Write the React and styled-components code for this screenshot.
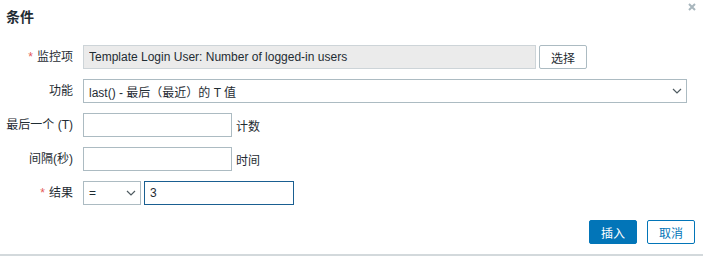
import React from 'react';
import styled, { createGlobalStyle } from 'styled-components';

const GlobalStyle = createGlobalStyle`
  html, body {
    margin: 0;
    padding: 0;
    background: #fff;
  }
  body {
    font-family: "Liberation Sans", Arial, "Noto Sans CJK SC", sans-serif;
    font-size: 12px;
    color: #1f2c33;
  }
`

const Dialog = styled.div`
  position: relative;
  width: 703px;
  height: 256px;
  box-sizing: border-box;
  border-bottom: 2px solid #d3d9dc;
  background: #fff;
`

const Header = styled.div`
  height: 30px;
  padding: 9px 6px 0;
  box-sizing: border-box;
`

const Title = styled.h4`
  margin: 0;
  font-size: 14px;
  font-weight: bold;
  line-height: 16px;
  color: #1f2c33;
`

const CloseButton = styled.button`
  position: absolute;
  top: 2px;
  right: 6px;
  width: 10px;
  height: 10px;
  padding: 0;
  border: 0;
  background: none;
  display: flex;
  align-items: center;
  justify-content: center;
  cursor: pointer;
`

const Form = styled.div`
  display: grid;
  grid-template-columns: 73px 1fr;
  column-gap: 10px;
  row-gap: 10px;
  margin-top: 15px;
`

const Label = styled.label`
  text-align: right;
  align-self: center;
  white-space: nowrap;
  line-height: 14px;
`

const Required = styled.span`
  color: #e45959;
  margin-right: 4px;
`

const Field = styled.div`
  display: flex;
  align-items: center;
  gap: ${p => p.gap ?? 3}px;
`

const TextBox = styled.input`
  box-sizing: border-box;
  width: ${p => p.w}px;
  height: 24px;
  margin: 0;
  padding: 0 5px;
  font: inherit;
  color: #1f2c33;
  background: ${p => (p.readOnly ? '#ebebeb' : '#fff')};
  border: 1px solid ${p => (p.focused ? '#1a5f91' : p.readOnly ? '#cdd4d8' : '#acbbc2')};
  outline: none;
`

const SelectBox = styled.div`
  box-sizing: border-box;
  width: ${p => p.w}px;
  height: 24px;
  padding: 0 4px 0 5px;
  display: flex;
  align-items: center;
  justify-content: space-between;
  border: 1px solid #acbbc2;
  background: #fff;
`

const Hint = styled.span`
  margin-left: 1px;
`

const Button = styled.button`
  box-sizing: border-box;
  height: 24px;
  min-width: 48px;
  padding: 0 8px;
  font: inherit;
  border-radius: 2px;
  cursor: pointer;
  color: ${p => (p.primary ? '#fff' : p.neutral ? '#1f2c33' : '#0275b8')};
  background: ${p => (p.primary ? '#0275b8' : '#fff')};
  border: 1px solid ${p => (p.primary ? '#0275b8' : p.neutral ? '#acbbc2' : '#0275b8')};
`

const Footer = styled.div`
  display: flex;
  justify-content: flex-end;
  gap: 10px;
  margin-top: 15px;
  padding-right: 8px;
`

const Chevron = () => (
  <svg width="10" height="6" viewBox="0 0 10 6">
    <path d="M1 1 L5 5 L9 1" fill="none" stroke="#4f5b61" strokeWidth="1.2" />
  </svg>
)

const CloseIcon = () => (
  <svg width="8" height="8" viewBox="0 0 8 8">
    <path d="M1 1 L7 7 M7 1 L1 7" stroke="#a8b6bd" strokeWidth="2" />
  </svg>
)

const App = () => {
  return (
    <Dialog>
      <GlobalStyle />
      <Header>
        <Title>条件</Title>
      </Header>
      <CloseButton aria-label="关闭"><CloseIcon /></CloseButton>
      <Form>
        <Label><Required>*</Required>监控项</Label>
        <Field>
          <TextBox w={453} readOnly value="Template Login User: Number of logged-in users" />
          <Button neutral>选择</Button>
        </Field>

        <Label>功能</Label>
        <Field>
          <SelectBox w={604}>
            <span>last() - 最后（最近）的 T 值</span>
            <Chevron />
          </SelectBox>
        </Field>

        <Label>最后一个 (T)</Label>
        <Field>
          <TextBox w={149} defaultValue="" />
          <Hint>计数</Hint>
        </Field>

        <Label>间隔(秒)</Label>
        <Field>
          <TextBox w={149} defaultValue="" />
          <Hint>时间</Hint>
        </Field>

        <Label><Required>*</Required>结果</Label>
        <Field>
          <SelectBox w={58}>
            <span>=</span>
            <Chevron />
          </SelectBox>
          <TextBox w={150} focused defaultValue="3" />
        </Field>
      </Form>
      <Footer>
        <Button primary>插入</Button>
        <Button>取消</Button>
      </Footer>
    </Dialog>
  );
};

export default App;
